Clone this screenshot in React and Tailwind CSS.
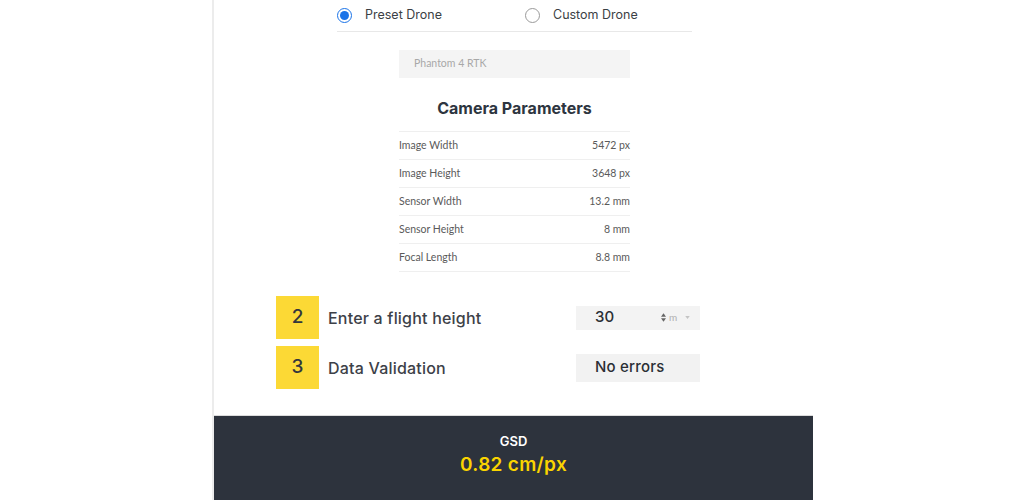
import React, { useState } from 'react';

const head = { fontFamily: 'Inter, "Open Sans", sans-serif' };
const body = { fontFamily: 'Lato, "Open Sans", sans-serif' };

const params = [
  ['Image Width', '5472 px'],
  ['Image Height', '3648 px'],
  ['Sensor Width', '13.2 mm'],
  ['Sensor Height', '8 mm'],
  ['Focal Length', '8.8 mm'],
];

const Radio = ({ checked, label, onClick }) => (
  <button type="button" onClick={onClick} className="flex items-center w-[188px] shrink-0 h-full">
    <span
      className={`w-[15px] h-[15px] rounded-full flex items-center justify-center border ${
        checked ? 'border-[#1a73e8] border-[1.5px]' : 'border-[#9a9a9a]'
      }`}
    >
      {checked && <span className="w-[9px] h-[9px] rounded-full bg-[#1a73e8]" />}
    </span>
    <span className="ml-[13px] text-[12.5px] text-[#3b3f45]" style={head}>{label}</span>
  </button>
);

const Step = ({ n, label, children }) => (
  <div className="flex items-center">
    <div className="w-[43px] h-[43px] bg-[#fcd935] flex items-center justify-center text-[19px] font-medium text-[#33373d]" style={head}>
      {n}
    </div>
    <div className="ml-[9px] w-[248px] text-[16px] font-medium tracking-[0.2px] text-[#3d4148]" style={head}>{label}</div>
    {children}
  </div>
);

export default function App() {
  const [preset, setPreset] = useState(true);
  const [height, setHeight] = useState(30);

  return (
    <div className="min-h-screen bg-white">
      <div className="ml-[212px] w-[601px] border-l-2 border-[#ececec] flex flex-col">
        <div className="h-[415px] flex flex-col">
          {/* drone type */}
          <div className="w-[355px] ml-[123px] h-[32px] border-b border-[#e8e8e8] flex items-center overflow-hidden">
            <Radio checked={preset} label="Preset Drone" onClick={() => setPreset(true)} />
            <Radio checked={!preset} label="Custom Drone" onClick={() => setPreset(false)} />
          </div>

          <div className="ml-[185px] mt-[18px] w-[231px] h-[28px] bg-[#f4f4f4] flex items-center pl-[15px] text-[10.5px] text-[#a8a8a8]" style={body}>
            Phantom 4 RTK
          </div>

          <h2 className="mt-[19px] ml-[185px] w-[231px] text-center text-[16px] leading-[22px] font-bold text-[#2d3540]" style={head}>
            Camera Parameters
          </h2>

          <div className="mt-[12px] ml-[185px] w-[231px] border-t border-[#efefef]" style={body}>
            {params.map(([k, v]) => (
              <div key={k} className="h-[28px] border-b border-[#efefef] flex items-center justify-between text-[10.5px] text-[#5a5a5a]">
                <span>{k}</span>
                <span>{v}</span>
              </div>
            ))}
          </div>

          <div className="mt-[24px] ml-[62px] flex flex-col gap-[7px]">
            <Step n="2" label="Enter a flight height">
              <div className="w-[124px] h-[24px] bg-[#f3f3f3] flex items-center pl-[19px] pr-[8px]">
                <input
                  value={height}
                  onChange={(e) => setHeight(e.target.value)}
                  className="w-[60px] bg-transparent outline-none text-[15px] font-medium text-[#2b2f35]"
                  style={head}
                />
                <span className="flex flex-col items-center leading-none ml-[6px]">
                  <svg width="5" height="4" viewBox="0 0 6 4"><path d="M0 4 L3 0 L6 4 Z" fill="#666" /></svg>
                  <svg width="5" height="4" viewBox="0 0 6 4" className="mt-[1px]"><path d="M0 0 L3 4 L6 0 Z" fill="#666" /></svg>
                </span>
                <span className="ml-[3px] text-[10px] text-[#b0b0b0]" style={body}>m</span>
                <svg width="5" height="3" viewBox="0 0 6 4" className="ml-[8px]"><path d="M0 0 L3 4 L6 0 Z" fill="#c4c4c4" /></svg>
              </div>
            </Step>
            <Step n="3" label="Data Validation">
              <div className="w-[124px] h-[28px] bg-[#f2f2f2] flex items-center pl-[19px] text-[15px] font-medium tracking-[0.2px] text-[#2b2f35]" style={head}>
                No errors
              </div>
            </Step>
          </div>
        </div>

        <div className="h-[85px] bg-[#2d333d] border-t border-[#dcdcdc] flex flex-col items-center pt-[16px]">
          <div className="text-[13px] font-semibold text-white leading-[18px]" style={head}>GSD</div>
          <div className="mt-[2px] text-[19px] font-semibold tracking-[0.3px] text-[#fad400] leading-[26px]" style={head}>
            0.82 cm/px
          </div>
        </div>
      </div>
    </div>
  );
}
